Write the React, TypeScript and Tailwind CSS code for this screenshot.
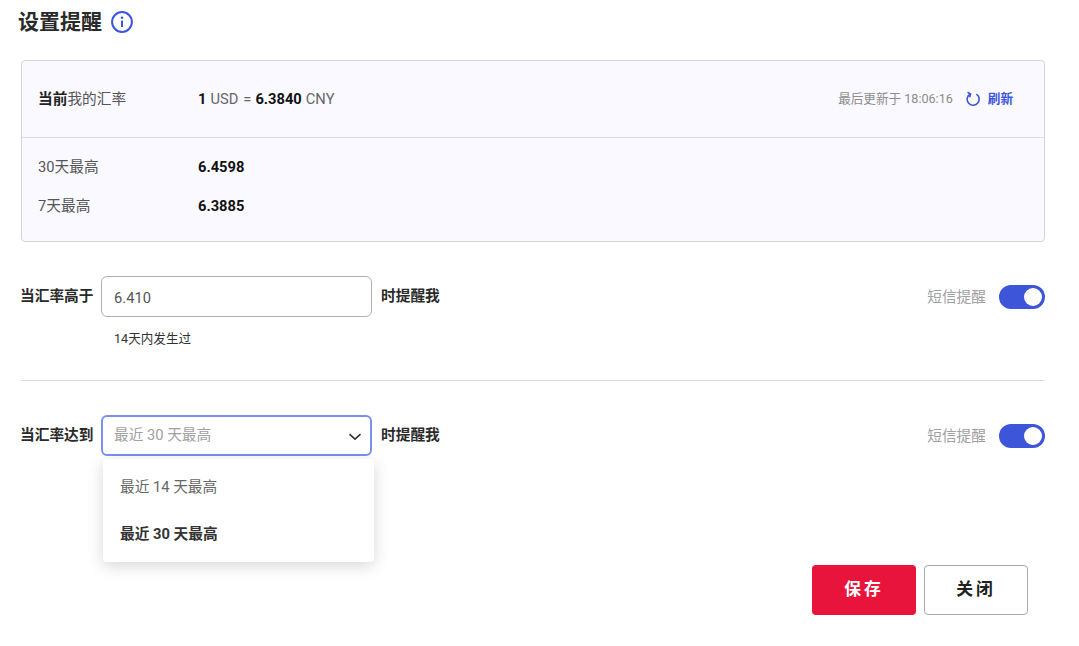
import React from "react";

function Toggle() {
  return (
    <div className="flex items-center gap-[13px]">
      <span className="text-[14.7px] leading-[20px] text-[#a0a0a0]">短信提醒</span>
      <div className="flex h-[24px] w-[46px] items-center justify-end rounded-full bg-[#3d56d9] pr-[3px]">
        <div className="h-[18px] w-[18px] rounded-full bg-white" />
      </div>
    </div>
  );
}

function Info() {
  return (
    <svg width="22" height="22" viewBox="0 0 22 22" fill="none" stroke="#3d56d9">
      <circle cx="11" cy="11" r="9.9" strokeWidth="2" />
      <circle cx="11" cy="6.8" r="1.3" fill="#3d56d9" stroke="none" />
      <path d="M11 9.6V16" strokeWidth="2" />
    </svg>
  );
}

function Refresh() {
  return (
    <svg width="15" height="16" viewBox="0 0 15 16" fill="none" stroke="#3d56d9" strokeWidth="1.6">
      <path d="M10.4 3.2A6 6 0 1 1 4.2 3" />
      <path d="M1.6 1.2L4.6 3L3.6 6.2" />
    </svg>
  );
}

export default function App() {
  return (
    <div className="relative h-[646px] w-[1079px] overflow-hidden bg-white font-['Roboto','Noto_Sans_CJK_SC',sans-serif] text-[#222222]">
      <div className="flex h-[44px] items-center gap-[9px] pl-[18px]">
        <h1 className="text-[21px] font-bold leading-[28px] text-[#2a2a2a]">设置提醒</h1>
        <Info />
      </div>

      <div className="ml-[21px] mr-[34px] mt-[16px] h-[182px] rounded-[4px] border border-[#d4d4da] bg-[#f9f9ff]">
        <div className="flex h-[77px] items-center border-b border-[#dcdce2] pl-[16px] pr-[31px]">
          <div className="w-[160px] text-[14.7px] text-[#555555]">
            <b className="text-[#222222]">当前</b>我的汇率
          </div>
          <div className="flex gap-[4px] whitespace-pre text-[14.7px] text-[#666666]">
            <b className="text-[#111111]">1</b>
            <span>USD</span>
            <span className="pl-[1px]">=</span>
            <b className="text-[#111111]">6.3840</b>
            <span>CNY</span>
          </div>
          <div className="ml-auto flex items-center">
            <span className="text-[12.6px] text-[#8c8c8c]">最后更新于 18:06:16</span>
            <span className="ml-[13px]"><Refresh /></span>
            <span className="ml-[7px] text-[12.6px] font-bold text-[#3d56d9]">刷新</span>
          </div>
        </div>
        <div className="flex flex-col gap-[19px] pl-[16px] pt-[19px]">
          <div className="flex h-[20px] items-center text-[14.7px] text-[#555555]">
            <span className="w-[160px]">30天最高</span>
            <b className="text-[#111111]">6.4598</b>
          </div>
          <div className="flex h-[20px] items-center text-[14.7px] text-[#555555]">
            <span className="w-[160px]">7天最高</span>
            <b className="text-[#111111]">6.3885</b>
          </div>
        </div>
      </div>

      <div className="ml-[20px] mr-[34px] mt-[34px] flex h-[41px] items-center">
        <span className="w-[81px] text-[14.7px] font-bold text-[#2a2a2a]">当汇率高于</span>
        <div className="flex h-[41px] w-[271px] items-center rounded-[6px] border border-[#b0b0b0] pl-[12px] pt-[3px] text-[14.7px] text-[#555555]">
          6.410
        </div>
        <span className="ml-[9px] text-[14.7px] font-bold text-[#2a2a2a]">时提醒我</span>
        <div className="ml-auto"><Toggle /></div>
      </div>
      <div className="ml-[114px] mt-[13px] text-[12.6px] leading-[17px] text-[#333333]">14天内发生过</div>

      <div className="ml-[21px] mr-[34px] mt-[33px] border-t border-[#dedede]" />

      <div className="ml-[20px] mr-[34px] mt-[34px] flex h-[41px] items-center">
        <span className="w-[81px] text-[14.7px] font-bold text-[#2a2a2a]">当汇率达到</span>
        <div className="relative flex h-[41px] w-[271px] items-center justify-between rounded-[6px] border-2 border-[#7b8ff0] pl-[11px] pr-[8px] text-[14.7px] text-[#a0a0a0]">
          <span>最近 30 天最高</span>
          <svg width="14" height="8" viewBox="0 0 14 8" fill="none" stroke="#333333" strokeWidth="1.6" className="mt-[3px]">
            <path d="M1.5 1.2L7 6.2L12.5 1.2" />
          </svg>
          <div className="absolute left-0 top-[42px] z-10 flex h-[103px] w-[271px] flex-col rounded-[4px] bg-white pl-[17px] pt-[3px] text-[14.7px] shadow-[0_4px_16px_rgba(0,0,0,0.16)]">
            <div className="flex h-[48px] items-center pt-[3px] text-[#666666]">最近 14 天最高</div>
            <div className="flex h-[48px] items-center font-bold text-[#333333]">最近 30 天最高</div>
          </div>
        </div>
        <span className="ml-[9px] text-[14.7px] font-bold text-[#2a2a2a]">时提醒我</span>
        <div className="ml-auto"><Toggle /></div>
      </div>

      <div className="mr-[51px] mt-[109px] flex justify-end gap-[8px]">
        <button className="h-[50px] w-[104px] rounded-[4px] bg-[#e8143c] text-[16.8px] font-bold tracking-[3px] text-white">保存</button>
        <button className="h-[50px] w-[104px] rounded-[4px] border border-[#a8a8a8] bg-white text-[16.8px] font-bold tracking-[3px] text-[#222222]">关闭</button>
      </div>
    </div>
  );
}
